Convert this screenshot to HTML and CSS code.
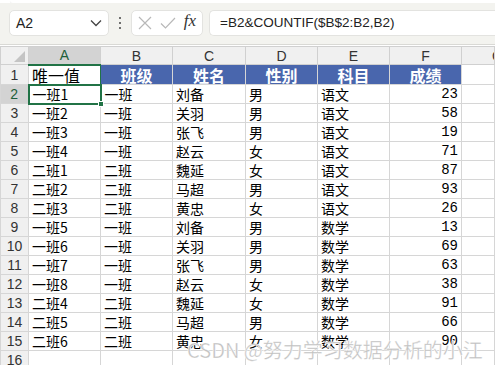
FILE: index.html
```html
<!DOCTYPE html>
<html lang="zh-CN">
<head>
  <meta charset="UTF-8" />
  <title>唯一值 - COUNTIF</title>
  <link rel="stylesheet" href="styles.css">
</head>
<body>

<div class="ribbon-edge"></div>

<div class="formula-bar">
  <div class="name-box">
    <span>A2</span>
    <svg class="chev" width="12" height="8" viewBox="0 0 12 8"><path d="M1 1.5 L6 6.5 L11 1.5" fill="none" stroke="#444" stroke-width="1.3"/></svg>
  </div>
  <div class="dots">
    <span></span><span></span><span></span>
  </div>
  <div class="fx-box">
    <svg width="14" height="14" viewBox="0 0 14 14"><path d="M1 1 L13 13 M13 1 L1 13" stroke="#b8b8b8" stroke-width="1.2"/></svg>
    <svg width="16" height="14" viewBox="0 0 16 14"><path d="M1 7.5 L5.5 12 L15 2" fill="none" stroke="#b8b8b8" stroke-width="1.2"/></svg>
    <span class="fx">fx</span>
  </div>
  <div class="formula">=B2&amp;COUNTIF($B$2:B2,B2)</div>
</div>

<table class="grid">
  <colgroup>
    <col class="w-rn"><col class="w-col"><col class="w-col"><col class="w-c"><col class="w-col"><col class="w-col"><col class="w-col"><col>
  </colgroup>
  <thead>
    <tr>
      <th class="corner"><span class="tri"></span></th>
      <th class="col sel">A</th><th class="col">B</th><th class="col">C</th><th class="col">D</th><th class="col">E</th><th class="col">F</th><th class="col g">G</th>
    </tr>
  </thead>
  <tbody id="rows">
    <tr class="title">
      <th class="rn">1</th>
      <td class="a1">唯一值</td>
      <td class="hd">班级</td><td class="hd">姓名</td><td class="hd">性别</td><td class="hd">科目</td><td class="hd">成绩</td>
      <td></td>
    </tr>
  </tbody>
</table>

<div class="watermark">CSDN @努力学习数据分析的小江</div>

<script>
  const data = [
    ['一班1','一班','刘备','男','语文',23],
    ['一班2','一班','关羽','男','语文',58],
    ['一班3','一班','张飞','男','语文',19],
    ['一班4','一班','赵云','女','语文',71],
    ['二班1','二班','魏延','女','语文',87],
    ['二班2','二班','马超','男','语文',93],
    ['二班3','二班','黄忠','女','语文',26],
    ['一班5','一班','刘备','男','数学',13],
    ['一班6','一班','关羽','男','数学',69],
    ['一班7','一班','张飞','男','数学',63],
    ['一班8','一班','赵云','女','数学',38],
    ['二班4','二班','魏延','女','数学',91],
    ['二班5','二班','马超','男','数学',66],
    ['二班6','二班','黄忠','女','数学',90],
    ['','','','','','']
  ];

  const body = document.getElementById('rows');
  data.forEach((r, i) => {
    const tr = document.createElement('tr');
    const n = i + 2;
    let html = `<th class="rn${n === 2 ? ' sel' : ''}">${n}</th>`;
    r.forEach((v, j) => {
      let cls = j === 5 ? 'num' : '';
      if (n === 2 && j === 0) cls = 'active';
      html += `<td class="${cls}">${v}${cls === 'active' ? '<span class="handle"></span>' : ''}</td>`;
    });
    html += '<td></td>';
    tr.innerHTML = html;
    body.appendChild(tr);
  });
</script>

</body>
</html>
```

FILE: styles.css
```css
* {
  box-sizing: border-box;
}

body {
  margin: 0;
  width: 495px;
  height: 365px;
  overflow: hidden;
  position: relative;
  background: #fff;
  font-family: "Liberation Sans", "Noto Sans CJK SC", sans-serif;
}

.ribbon-edge {
  height: 3px;
  margin-left: 10px;
  background: #fff;
  border-bottom-left-radius: 6px;
  box-shadow: 0 1px 1px rgba(0,0,0,0.06);
}

.formula-bar {
  height: 42px;
  background: #f3f3ef;
  display: flex;
  align-items: center;
  padding: 0 0 2px 9px;
  border-bottom: 1px solid #d9d9d5;
}

.name-box,
.fx-box,
.formula {
  height: 26px;
  background: #fff;
  border: 1px solid #e3e3e0;
  border-radius: 5px;
  display: flex;
  align-items: center;
}

.name-box {
  width: 100px;
  padding: 0 6px 0 6px;
  justify-content: space-between;
  font-size: 14px;
  color: #222;
}

.dots {
  width: 22px;
  display: flex;
  flex-direction: column;
  align-items: center;
  gap: 3px;
}

.dots span {
  width: 2px;
  height: 2px;
  background: #444;
  border-radius: 1px;
}

.fx-box {
  width: 72px;
  padding: 0 6px 0 6px;
  justify-content: space-between;
}

.fx {
  font-family: "Liberation Serif", serif;
  font-style: italic;
  font-size: 17px;
  color: #333;
  margin-top: -3px;
}

.formula {
  flex: 1;
  margin-left: 6px;
  padding-left: 10px;
  border-right: none;
  border-radius: 5px 0 0 5px;
  font-size: 13.5px;
  color: #222;
}

.grid {
  margin-top: 1px;
  border-collapse: collapse;
  table-layout: fixed;
  width: 495px;
}

.w-rn { width: 28px; }
.w-col { width: 72px; }
.w-c { width: 73px; }

.grid th,
.grid td {
  border: 1px solid #d6d6d6;
  padding: 0;
  white-space: nowrap;
  overflow: hidden;
}

.grid thead th {
  height: 18px;
  background: #f0f0f0;
  font-weight: normal;
  font-size: 14px;
  color: #333;
  text-align: center;
  border-color: #d0d0d0;
}

.grid thead th.g {
  text-align: right;
  padding-right: 0;
  text-indent: 30px;
}

.grid thead th.sel {
  background: #d3d3d3;
  border-bottom: 2px solid #217346;
  color: #1f5f3a;
}

.corner {
  position: relative;
}

.tri {
  position: absolute;
  right: 3px;
  bottom: 2px;
  width: 0;
  height: 0;
  border-left: 11px solid transparent;
  border-bottom: 11px solid #c4c4c4;
}

.grid tbody tr {
  height: 19px;
}

.rn {
  background: #f0f0f0;
  font-weight: normal;
  font-size: 14px;
  color: #333;
  text-align: center;
  border-color: #d0d0d0;
}

.rn.sel {
  background: #d3d3d3;
  border-right: 2px solid #217346;
  color: #1f5f3a;
}

.grid td {
  font-family: "Noto Sans CJK SC", "Liberation Sans", sans-serif;
  font-size: 14px;
  line-height: 17px;
  color: #000;
  padding-left: 3px;
}

.grid td.num {
  text-align: right;
  padding-right: 3px;
  font-family: "Liberation Mono", monospace;
  font-size: 14px;
}

.grid td.a1 {
  font-size: 16px;
  line-height: 18px;
  overflow: visible;
  border-left: 1px solid #217346;
  border-right: 1px solid #217346;
}

.grid td.hd {
  background: #4966ad;
  color: #fff;
  font-weight: bold;
  font-size: 16px;
  line-height: 18px;
  overflow: visible;
  text-align: center;
  padding-left: 0;
  border-left: 1px solid #111;
  border-bottom-color: #d6d6d6;
}

.grid td.active {
  border: 2px solid #217346;
  position: relative;
  overflow: visible;
}

.handle {
  position: absolute;
  right: -4px;
  bottom: -4px;
  width: 6px;
  height: 6px;
  background: #217346;
  border: 1px solid #fff;
}

.watermark {
  position: absolute;
  left: 187px;
  top: 335px;
  font-family: "Noto Sans CJK SC", sans-serif;
  font-size: 20px;
  color: rgba(185, 185, 185, 0.9);
  -webkit-text-stroke: 0.6px rgba(255,255,255,0.6);
  text-shadow: 0 0 1px #fff, 0 0 1px #fff;
  white-space: nowrap;
}
```
